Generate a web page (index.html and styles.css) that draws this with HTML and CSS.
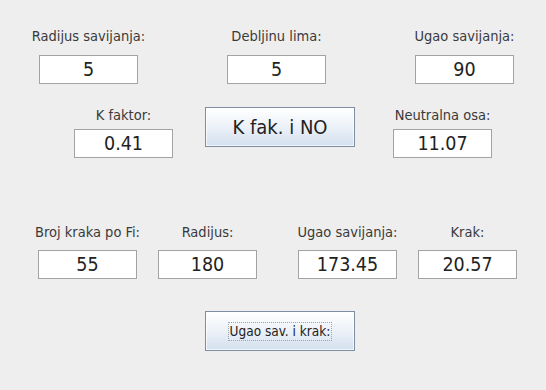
FILE: index.html
```html
<!DOCTYPE html>
<html lang="en">
<head>
  <meta charset="UTF-8" />
  <meta name="viewport" content="width=device-width, initial-scale=1.0"/>
  <title>K faktor kalkulator</title>
  <link rel="stylesheet" href="styles.css">
</head>
<body>

  <div class="panel">

    <!-- Ulazni podaci -->
    <div class="row row-top">
      <div class="group">
        <label class="label">Radijus savijanja:</label>
        <div class="field">5</div>
      </div>
      <div class="group">
        <label class="label">Debljinu lima:</label>
        <div class="field">5</div>
      </div>
      <div class="group">
        <label class="label">Ugao savijanja:</label>
        <div class="field">90</div>
      </div>
    </div>

    <!-- K faktor i neutralna osa -->
    <div class="row row-mid">
      <div class="group">
        <label class="label">K faktor:</label>
        <div class="field">0.41</div>
      </div>
      <button class="btn btn-big">K fak. i NO</button>
      <div class="group">
        <label class="label">Neutralna osa:</label>
        <div class="field">11.07</div>
      </div>
    </div>

    <!-- Krak -->
    <div class="row row-bottom">
      <div class="group">
        <label class="label">Broj kraka po Fi:</label>
        <div class="field">55</div>
      </div>
      <div class="group">
        <label class="label">Radijus:</label>
        <div class="field">180</div>
      </div>
      <div class="group group-wide">
        <label class="label">Ugao savijanja:</label>
        <div class="field">173.45</div>
      </div>
      <div class="group">
        <label class="label">Krak:</label>
        <div class="field">20.57</div>
      </div>
    </div>

    <div class="row row-action">
      <button class="btn btn-small"><span class="focus">Ugao sav. i krak:</span></button>
    </div>

  </div>

</body>
</html>
```

FILE: styles.css
```css
body {
  margin: 0;
  background: #eeeeee;
  font-family: "DejaVu Sans Condensed", "Liberation Sans", sans-serif;
  color: #333333;
}

.panel {
  width: 546px;
  height: 390px;
  padding-top: 28px;
  box-sizing: border-box;
}

.row {
  display: flex;
  align-items: flex-start;
}

.group {
  width: 99px;
  display: flex;
  flex-direction: column;
  align-items: center;
}

.label {
  font-size: 14.5px;
  line-height: 17px;
  white-space: nowrap;
  color: #3a3a3a;
}

.field {
  width: 99px;
  height: 29px;
  box-sizing: border-box;
  background: #ffffff;
  border: 1px solid #a3a3a3;
  font-size: 19.5px;
  line-height: 27px;
  text-align: center;
  color: #222222;
}

/* row 1 */
.row-top {
  padding-left: 39px;
  gap: 89px;
}

.row-top .field {
  margin-top: 10px;
}

/* row 2 */
.row-mid {
  margin-top: 23px;
  padding-left: 74px;
}

.row-mid .field {
  margin-top: 5px;
}

.row-mid .btn-big {
  margin-left: 32px;
  margin-right: 38px;
}

/* row 3 */
.row-bottom {
  margin-top: 66px;
  padding-left: 38px;
  gap: 21px;
}

.row-bottom .field {
  margin-top: 9px;
}

.row-bottom .group-wide {
  margin-left: 20px;
}

/* row 4 */
.row-action {
  margin-top: 32px;
  padding-left: 205px;
}

.btn {
  width: 150px;
  height: 40px;
  padding: 0;
  border: 1px solid #7d8ea2;
  background: linear-gradient(#ffffff 0%, #eef3f9 45%, #d3e0ee 100%);
  color: #222222;
  font-family: "DejaVu Sans Condensed", "Liberation Sans", sans-serif;
  display: flex;
  align-items: center;
  justify-content: center;
  box-shadow: inset 0 0 0 1px rgba(255, 255, 255, 0.7);
}

.btn-big {
  font-size: 20px;
}

.btn-small {
  font-size: 13.5px;
}

.focus {
  border: 1px dotted #9aa6b4;
  padding: 1px 1px;
  line-height: 15px;
}
```
